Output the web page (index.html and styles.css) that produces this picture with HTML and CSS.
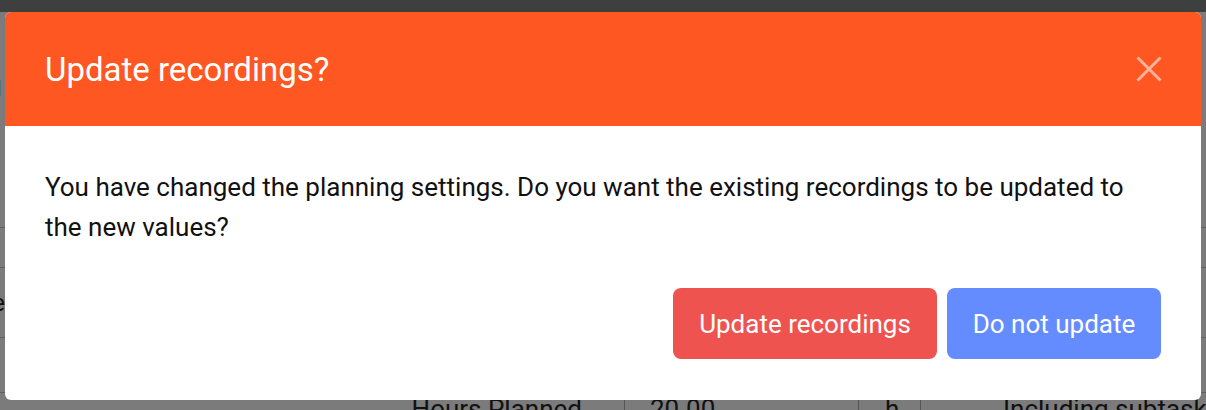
FILE: index.html
```html
<!DOCTYPE html>
<html lang="en">
<head>
<meta charset="utf-8">
<title>Update recordings?</title>
<link rel="stylesheet" href="styles.css">
</head>
<body>
<div class="page">
  <div class="topbar"></div>
  <div class="bg-row bg-title"><div class="bg-cell"><span class="bg-heading">Menu</span></div></div>
  <div class="bg-row bg-r1"></div>
  <div class="bg-row bg-r2"><div class="bg-cell"><span class="bg-label">Name</span></div></div>
  <div class="bg-row bg-r3"></div>
  <div class="bg-row bg-hours">
    <div class="col col-label">Hours Planned</div>
    <div class="col col-value">20.00</div>
    <div class="col col-unit">h</div>
    <div class="col col-note">Including subtasks</div>
  </div>
</div>

<div class="modal" role="dialog" aria-labelledby="modal-title">
  <div class="modal-header">
    <h2 class="modal-title" id="modal-title">Update recordings?</h2>
    <button class="modal-close" aria-label="Close">
      <svg width="26" height="26" viewBox="0 0 26 26"><path d="M1.5 1.5 L24.5 24.5 M24.5 1.5 L1.5 24.5" stroke="currentColor" stroke-width="3" fill="none"/></svg>
    </button>
  </div>
  <div class="modal-body">
    <p class="modal-text">You have changed the planning settings. Do you want the existing recordings to be updated to the new values?</p>
    <div class="modal-actions">
      <button class="btn btn-danger">Update recordings</button>
      <button class="btn btn-primary">Do not update</button>
    </div>
  </div>
</div>
</body>
</html>
```
FILE: styles.css
```css
* { box-sizing: border-box; }
html, body { margin: 0; padding: 0; }
body {
  width: 1206px;
  height: 410px;
  overflow: hidden;
  background: #7b7b7b;
  font-family: Roboto, "Liberation Sans", sans-serif;
  position: relative;
}
.page { display: flex; flex-direction: column; }
.topbar { height: 12px; background: #3e3f3f; }
.bg-row { border-bottom: 1px solid #5f5f5f; display: flex; }
.bg-title { height: 216px; border-bottom: 1px solid #5f5f5f; }
.bg-r1 { height: 40px; }
.bg-r2 { height: 70px; }
.bg-r3 { height: 55px; }
.bg-cell {
  width: 5px;
  display: flex;
  justify-content: flex-end;
  align-items: flex-start;
  white-space: nowrap;
}
.bg-title .bg-cell { width: 2px; padding-top: 56px; }
.bg-heading { font-size: 30px; color: #1b1b1b; }
.bg-r2 .bg-cell { align-items: center; }
.bg-label { font-size: 24px; color: #111; }
.bg-hours {
  border-bottom: none;
  height: 40px;
  font-size: 26px;
  color: #111;
  white-space: nowrap;
}
.col { line-height: 32px; flex-shrink: 0; }
.col-label { width: 625px; text-align: right; padding-right: 42px; border-right: 1px solid #555; }
.col-value { width: 234px; padding-left: 25px; border-right: 1px solid #555; }
.col-unit { width: 62px; padding-left: 26px; border-right: 1px solid #555; }
.col-note { padding-left: 82px; }

.modal {
  position: absolute;
  left: 5px;
  top: 12px;
  width: 1196px;
  height: 388px;
  background: #fff;
  border-radius: 6px;
  overflow: hidden;
  display: flex;
  flex-direction: column;
}
.modal-header {
  height: 114px;
  background: #ff5722;
  display: flex;
  align-items: center;
  justify-content: space-between;
  padding: 0 39px 0 40px;
}
.modal-title {
  margin: 0;
  font-weight: 400;
  font-size: 33px;
  color: #fff;
}
.modal-close {
  background: none;
  border: 0;
  padding: 0;
  color: rgba(255, 255, 255, 0.55);
  display: flex;
}
.modal-body {
  flex: 1;
  padding: 41px 40px 0 40px;
  display: flex;
  flex-direction: column;
}
.modal-text {
  margin: 0;
  font-size: 26px;
  line-height: 40px;
  color: #111;
}
.modal-actions {
  margin-top: 41px;
  display: flex;
  justify-content: flex-end;
  gap: 10px;
}
.btn {
  height: 71px;
  border: 0;
  border-radius: 8px;
  color: #fff;
  font-family: Roboto, "Liberation Sans", sans-serif;
  font-size: 26px;
  padding: 0;
  white-space: nowrap;
}
.btn-danger { background: #ef5350; width: 264px; }
.btn-primary { background: #658cff; width: 214px; }
```
